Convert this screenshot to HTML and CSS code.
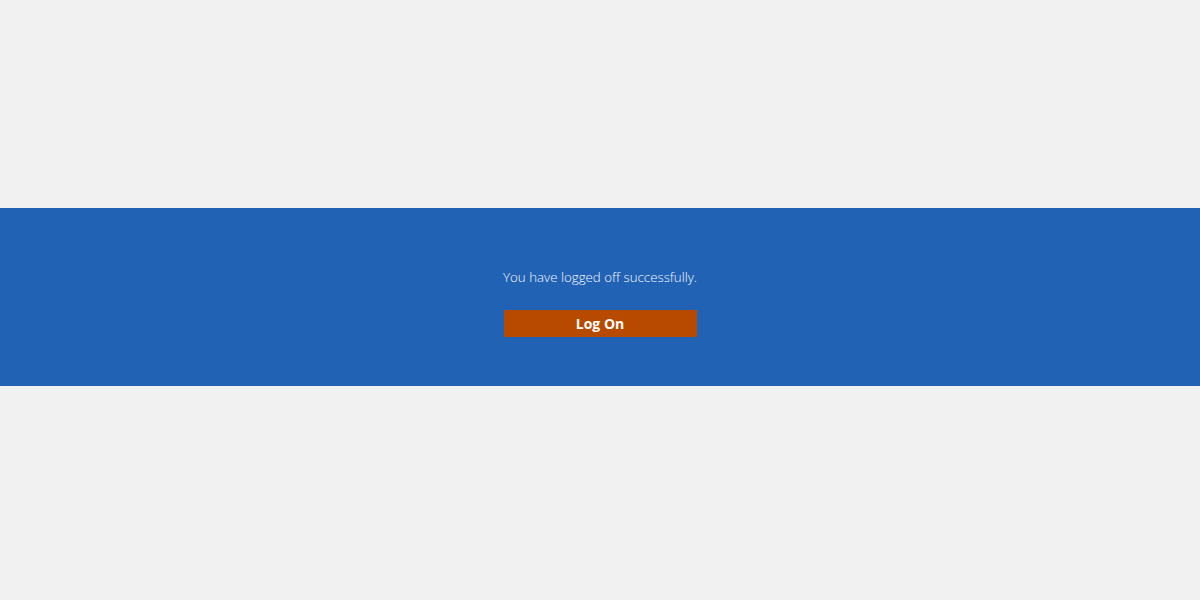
FILE: index.html
```html
<!DOCTYPE html>
<html>
<head>
<meta charset="utf-8">
<link rel="stylesheet" href="styles.css">
</head>
<body>
<div class="band">
  <div class="panel">
    <p class="msg">You have logged off successfully.</p>
    <button class="logon">Log On</button>
  </div>
</div>
</body>
</html>
```
FILE: styles.css
```css
html, body {
  margin: 0;
  padding: 0;
  height: 100%;
  background: #f1f1f1;
}
body {
  display: flex;
  flex-direction: column;
  justify-content: flex-start;
  padding-top: 208px;
  box-sizing: border-box;
}
.band {
  height: 178px;
  background: #2262b4;
  display: flex;
  justify-content: center;
}
.panel {
  width: 193px;
  padding-top: 59px;
  display: flex;
  flex-direction: column;
  align-items: center;
}
.msg {
  margin: 0;
  color: #f4f7fc;
  font-family: "Open Sans", sans-serif;
  font-weight: 300;
  font-size: 13.3px;
  line-height: 21px;
  white-space: nowrap;
}
.logon {
  margin-top: 22px;
  width: 193px;
  height: 27px;
  border: none;
  background: #b84a00;
  color: #ffffff;
  font-family: "Open Sans", sans-serif;
  font-weight: 700;
  font-size: 14px;
  padding: 0;
}
```
